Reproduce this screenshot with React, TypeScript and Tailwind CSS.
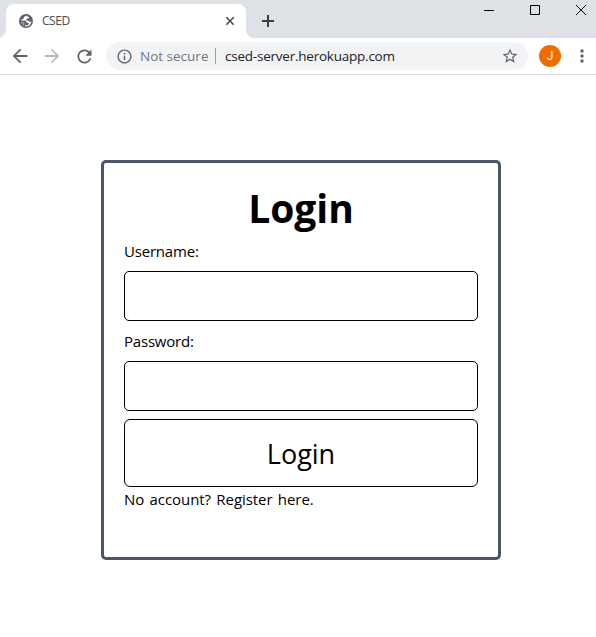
import type { ReactNode } from "react";
import {
  MdArrowBack,
  MdArrowForward,
  MdInfoOutline,
  MdMoreVert,
  MdRefresh,
  MdStarBorder,
} from "react-icons/md";

function Globe() {
  return (
    <svg className="ml-px shrink-0" width="14" height="14" viewBox="0 0 14 14">
      <circle cx="7" cy="7" r="7" fill="#5f6368" />
      <path
        d="M7.4 1.6C6.4 2.6 4.7 2.7 4.7 4.1c0 .9-.9 1.3-1.9 1.3L1.7 6.4h3.8c1 0 1.7.6 1.8 1.3.2.9 1.200.8 1.800 1.100.6.3.8.9.5 1.600-.9.800-1.900.9-3.300.8v1.200c1.900.2 3.400-.4 4.400-1.400.9-.9 1.500-2.100 1.600-3.400-.9.300-1.700.1-2.300-.4-.7-.5-1.400-.3-2.100-.6-.9-.4-.9-1.500-.1-1.900.9-.4 1.900.1 2.300-.9.200-.9-1.300-1.600-2.700-1.600z"
        fill="#fff"
      />
      <path d="M1.900 7.800h2.300c.9 0 1.100.5 1.200 1.200v3.100C3.500 11.600 2 9.900 1.900 7.800z" fill="#fff" opacity="0.35" />
    </svg>
  );
}

function TabStrip() {
  return (
    <div className="flex h-[38px] bg-[#dee1e6]">
      <div className="flex w-1.5 items-end">
        <svg width="6" height="8" viewBox="2 0 6 8">
          <path d="M8 0v8H0a8 8 0 0 0 8-8z" fill="#fff" />
        </svg>
      </div>
      <div className="mt-1 flex h-[34px] w-[240px] items-center rounded-t-lg bg-white pl-3 pr-[11px]">
        <Globe />
        <span className="ml-[9px] text-[12px] leading-4 tracking-[-0.45px] text-[#45494d]">CSED</span>
        <svg className="ml-auto" width="10" height="10" viewBox="0 0 10 10">
          <path d="M1.3 1.3l7.4 7.4M8.7 1.3L1.3 8.7" stroke="#45494d" strokeWidth="1.6" />
        </svg>
      </div>
      <div className="flex w-2 items-end">
        <svg width="8" height="8" viewBox="0 0 8 8">
          <path d="M0 0v8h8a8 8 0 0 1-8-8z" fill="#fff" />
        </svg>
      </div>
      <svg className="ml-2 mt-[15px]" width="12" height="12" viewBox="0 0 12 12">
        <path d="M6 0v12M0 6h12" stroke="#3c4043" strokeWidth="2" />
      </svg>
      <div className="ml-auto flex gap-9 pr-[10px] pt-[5px]">
        <svg width="10" height="10" viewBox="0 0 10 10">
          <path d="M0 5.5h10" stroke="#000" />
        </svg>
        <svg width="10" height="10" viewBox="0 0 10 10">
          <path d="M.5.5h9v9h-9z" fill="none" stroke="#000" />
        </svg>
        <svg width="10" height="10" viewBox="0 0 10 10">
          <path d="M0 0l10 10M10 0L0 10" stroke="#000" />
        </svg>
      </div>
    </div>
  );
}

function Toolbar() {
  return (
    <div className="flex h-[37px] items-center border-b border-[#dadce0] bg-white pl-[9px] text-[#5f6368]">
      <MdArrowBack size={22} className="shrink-0" />
      <MdArrowForward size={22} className="ml-[10px] shrink-0 text-[#bababc]" />
      <MdRefresh size={21} className="ml-[11px] shrink-0" />
      <div className="ml-[11px] flex h-7 w-[422px] items-center rounded-full bg-[#f1f3f4] pl-[10px] pr-[9px]">
        <MdInfoOutline size={17} className="shrink-0" />
        <span className="ml-[7px] w-[68px] whitespace-nowrap text-[13.5px] leading-5 text-[#73777b]">
          Not secure
        </span>
        <div className="ml-[7px] h-4 w-px bg-[#9aa0a6]" />
        <span className="ml-[9px] whitespace-nowrap text-[13.5px] leading-5 tracking-[-0.23px] text-[#202124]">
          csed-server.herokuapp.com
        </span>
        <MdStarBorder size={18} className="ml-auto shrink-0" />
      </div>
      <div className="ml-[11px] flex size-[22px] items-center justify-center rounded-full bg-[#ef6c00] font-['Roboto',sans-serif] text-[12px] text-white">
        J
      </div>
      <MdMoreVert size={20} className="ml-[11px] shrink-0" />
    </div>
  );
}

function Label({ htmlFor, children }: { htmlFor: string; children: ReactNode }) {
  return (
    <label htmlFor={htmlFor} className="flex h-10 items-center pt-px text-[15px] tracking-[-0.2px]">
      {children}
    </label>
  );
}

function LoginCard() {
  return (
    <form className="ml-[101px] mt-[85px] flex size-[400px] flex-col rounded-[5px] border-[3px] border-[#4c546c] px-5 pt-[21px] text-black">
      <h1 className="flex h-[47px] items-center justify-center text-[39px] font-bold leading-none">Login</h1>
      <Label htmlFor="username">Username:</Label>
      <input id="username" className="h-[50px] shrink-0 rounded-[5px] border border-black px-3 outline-none" />
      <Label htmlFor="password">Password:</Label>
      <input
        id="password"
        type="password"
        className="h-[50px] shrink-0 rounded-[5px] border border-black px-3 outline-none"
      />
      <button type="button" className="mt-2 h-[68px] shrink-0 rounded-[6px] border border-black pt-0.5 text-[27px]">
        Login
      </button>
      <a className="text-[15px] leading-6 tracking-[-0.06px] [word-spacing:1.5px]">No account? Register here.</a>
    </form>
  );
}

export default function App() {
  return (
    <div className="h-[637px] w-[596px] overflow-hidden bg-white font-['Open_Sans','Noto_Sans',sans-serif]">
      <TabStrip />
      <Toolbar />
      <LoginCard />
    </div>
  );
}
